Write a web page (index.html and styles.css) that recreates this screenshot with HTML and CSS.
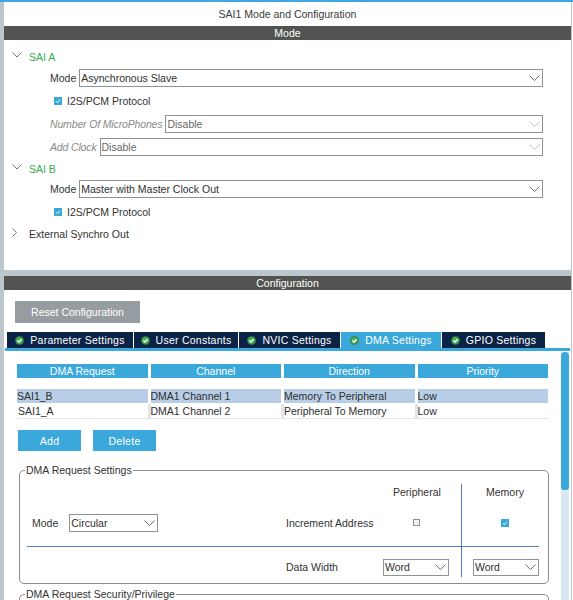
FILE: index.html
```html
<!DOCTYPE html>
<html>
<head>
<meta charset="utf-8">
<title>SAI1 Mode and Configuration</title>
<link rel="stylesheet" href="styles.css">
</head>
<body>
<div class="topline"></div>
<div class="app">
  <section class="panel mode-panel">
    <div class="title">SAI1 Mode and Configuration</div>
    <div class="bar">Mode</div>

    <div class="head head-a">
      <svg class="chev-down" width="10" height="6" viewBox="0 0 10 6"><polyline points="0.5,0.5 5,5 9.5,0.5" fill="none" stroke="#7a7a7a" stroke-width="1"/></svg>
      <span class="green">SAI A</span>
    </div>
    <div class="field f-mode-a">
      <span class="lbl">Mode</span>
      <div class="select"><span>Asynchronous Slave</span><svg width="11" height="6" viewBox="0 0 11 6"><polyline points="0.5,0.5 5.5,5.5 10.5,0.5" fill="none" stroke="#6e6e6e" stroke-width="1"/></svg></div>
    </div>
    <div class="check-row c-a">
      <svg class="cb" width="8" height="8" viewBox="0 0 8 8"><rect width="8" height="8" fill="#3aa8db"/><polyline points="2,4.2 3.4,5.6 6,2.6" fill="none" stroke="#fff" stroke-width="1"/></svg>
      <span>I2S/PCM Protocol</span>
    </div>
    <div class="field dis f-mics">
      <span class="lbl">Number Of MicroPhones</span>
      <div class="select"><span>Disable</span><svg width="11" height="6" viewBox="0 0 11 6"><polyline points="0.5,0.5 5.5,5.5 10.5,0.5" fill="none" stroke="#c4c4c4" stroke-width="1"/></svg></div>
    </div>
    <div class="field dis f-clock">
      <span class="lbl">Add Clock</span>
      <div class="select"><span>Disable</span><svg width="11" height="6" viewBox="0 0 11 6"><polyline points="0.5,0.5 5.5,5.5 10.5,0.5" fill="none" stroke="#c4c4c4" stroke-width="1"/></svg></div>
    </div>

    <div class="head head-b">
      <svg class="chev-down" width="10" height="6" viewBox="0 0 10 6"><polyline points="0.5,0.5 5,5 9.5,0.5" fill="none" stroke="#7a7a7a" stroke-width="1"/></svg>
      <span class="green">SAI B</span>
    </div>
    <div class="field f-mode-b">
      <span class="lbl">Mode</span>
      <div class="select"><span>Master with Master Clock Out</span><svg width="11" height="6" viewBox="0 0 11 6"><polyline points="0.5,0.5 5.5,5.5 10.5,0.5" fill="none" stroke="#6e6e6e" stroke-width="1"/></svg></div>
    </div>
    <div class="check-row c-b">
      <svg class="cb" width="8" height="8" viewBox="0 0 8 8"><rect width="8" height="8" fill="#3aa8db"/><polyline points="2,4.2 3.4,5.6 6,2.6" fill="none" stroke="#fff" stroke-width="1"/></svg>
      <span>I2S/PCM Protocol</span>
    </div>

    <div class="head head-ext">
      <svg class="chev-right" width="6" height="10" viewBox="0 0 6 10"><polyline points="0.5,0.5 4.5,4.5 0.5,8.5" fill="none" stroke="#7a7a7a" stroke-width="1"/></svg>
      <span>External Synchro Out</span>
    </div>
  </section>

  <section class="panel config-panel">
    <div class="bar">Configuration</div>
    <div class="reset">Reset Configuration</div>
    <div class="tabs">
      <div class="tab t1"><svg width="9" height="9" viewBox="0 0 9 9"><circle cx="4.5" cy="4.5" r="4" fill="#44ad55" stroke="#2a7a36" stroke-width="0.8"/><polyline points="2.4,4.6 3.9,6 6.6,3.2" fill="none" stroke="#fff" stroke-width="1.3"/></svg><span>Parameter Settings</span></div>
      <div class="tab t2"><svg width="9" height="9" viewBox="0 0 9 9"><circle cx="4.5" cy="4.5" r="4" fill="#44ad55" stroke="#2a7a36" stroke-width="0.8"/><polyline points="2.4,4.6 3.9,6 6.6,3.2" fill="none" stroke="#fff" stroke-width="1.3"/></svg><span>User Constants</span></div>
      <div class="tab t3"><svg width="9" height="9" viewBox="0 0 9 9"><circle cx="4.5" cy="4.5" r="4" fill="#44ad55" stroke="#2a7a36" stroke-width="0.8"/><polyline points="2.4,4.6 3.9,6 6.6,3.2" fill="none" stroke="#fff" stroke-width="1.3"/></svg><span>NVIC Settings</span></div>
      <div class="tab t4 active"><svg width="9" height="9" viewBox="0 0 9 9"><circle cx="4.5" cy="4.5" r="4" fill="#44ad55" stroke="#2a7a36" stroke-width="0.8"/><polyline points="2.4,4.6 3.9,6 6.6,3.2" fill="none" stroke="#fff" stroke-width="1.3"/></svg><span>DMA Settings</span></div>
      <div class="tab t5"><svg width="9" height="9" viewBox="0 0 9 9"><circle cx="4.5" cy="4.5" r="4" fill="#44ad55" stroke="#2a7a36" stroke-width="0.8"/><polyline points="2.4,4.6 3.9,6 6.6,3.2" fill="none" stroke="#fff" stroke-width="1.3"/></svg><span>GPIO Settings</span></div>
    </div>
    <div class="tabline"></div>
    <div class="content">
      <div class="main">
        <div class="thead">
          <div class="th">DMA Request</div>
          <div class="th">Channel</div>
          <div class="th">Direction</div>
          <div class="th">Priority</div>
        </div>
        <div class="rows">
          <div class="row sel">
            <div class="td">SAI1_B</div>
            <div class="td">DMA1 Channel 1</div>
            <div class="td">Memory To Peripheral</div>
            <div class="td">Low</div>
          </div>
          <div class="row plain">
            <div class="td first">SAI1_A</div>
            <div class="td">DMA1 Channel 2</div>
            <div class="td">Peripheral To Memory</div>
            <div class="td">Low</div>
          </div>
        </div>
        <div class="btns">
          <div class="btn">Add</div>
          <div class="btn">Delete</div>
        </div>

        <fieldset class="fs fs-req">
          <legend>DMA Request Settings</legend>
          <div class="grid">
            <div class="g-per">Peripheral</div>
            <div class="g-mem">Memory</div>
            <div class="g-vline"></div>
            <div class="g-mode"><span>Mode</span>
              <div class="select small"><span>Circular</span><svg width="11" height="6" viewBox="0 0 11 6"><polyline points="0.5,0.5 5.5,5.5 10.5,0.5" fill="none" stroke="#6e6e6e" stroke-width="1"/></svg></div>
            </div>
            <div class="g-inc">Increment Address</div>
            <div class="g-cb1"><span class="cb-off"></span></div>
            <div class="g-cb2"><svg width="8" height="8" viewBox="0 0 8 8"><rect width="8" height="8" fill="#3aa8db"/><polyline points="2,4.2 3.4,5.6 6,2.6" fill="none" stroke="#fff" stroke-width="1"/></svg></div>
            <div class="g-hline"></div>
            <div class="g-dw">Data Width</div>
            <div class="g-s1"><div class="select word"><span>Word</span><svg width="11" height="6" viewBox="0 0 11 6"><polyline points="0.5,0.5 5.5,5.5 10.5,0.5" fill="none" stroke="#6e6e6e" stroke-width="1"/></svg></div></div>
            <div class="g-s2"><div class="select word"><span>Word</span><svg width="11" height="6" viewBox="0 0 11 6"><polyline points="0.5,0.5 5.5,5.5 10.5,0.5" fill="none" stroke="#6e6e6e" stroke-width="1"/></svg></div></div>
          </div>
        </fieldset>

        <fieldset class="fs fs-sec">
          <legend>DMA Request Security/Privilege</legend>
          <div class="sec-body"></div>
        </fieldset>
      </div>
      <div class="scroll"><div class="thumb"></div></div>
    </div>
  </section>
</div>
</body>
</html>
```

FILE: styles.css
```css
* { box-sizing: border-box; }
html, body { margin: 0; padding: 0; }
body {
  width: 573px;
  height: 600px;
  overflow: hidden;
  background: #fff;
  font-family: "Liberation Sans", Arial, sans-serif;
  font-size: 10.5px;
  color: #333;
}
.topline { height: 2px; background: #3aa8db; }
.app {
  width: 572px;
  height: 598px;
  background: #bcc6cc;
  padding-left: 4px;
  display: flex;
  flex-direction: column;
  gap: 6px;
}
.panel { background: #fff; width: 567px; }
.mode-panel { height: 268px; }
.config-panel { flex: 1; overflow: hidden; }

.title {
  height: 24px;
  display: flex;
  align-items: center;
  justify-content: center;
  color: #3a3a3a;
}
.bar {
  height: 14px;
  line-height: 14px;
  background: #525452;
  color: #fff;
  text-align: center;
}

/* mode rows */
.head {
  height: 16px;
  display: flex;
  align-items: center;
  padding-left: 8px;
}
.head .chev-down { margin-right: 7px; margin-top: -5px; margin-left: 0; }
.head .chev-right { margin-right: 11px; margin-left: 0; margin-top: -2px; }
.green { color: #34ac52; }
.head-a { margin-top: 9px; }
.head-b { margin-top: 5px; }
.head-ext { margin-top: 6px; }

.field {
  height: 18px;
  display: flex;
  align-items: center;
  padding-left: 45px;
  padding-right: 28px;
  gap: 3px;
}
.field .lbl { padding-left: 1px; }
.f-mode-a { margin-top: 4px; }
.f-mics { margin-top: 6px; }
.f-clock { margin-top: 5px; }
.f-mode-b { margin-top: 3px; }

.select {
  flex: 1;
  height: 18px;
  border: 1px solid #8e9398;
  display: flex;
  align-items: center;
  justify-content: space-between;
  padding: 0 2px 0 1px;
  background: #fff;
  color: #303030;
}
.field.dis .lbl { font-style: italic; color: #8a8a8a; letter-spacing: -0.15px; }
.field.dis .select { color: #6a6a6a; }

.check-row {
  height: 16px;
  display: flex;
  align-items: center;
  padding-left: 50px;
  gap: 5px;
}
.c-a { margin-top: 6px; }
.c-b { margin-top: 6px; }

/* configuration */
.reset {
  margin: 11px 0 0 11px;
  width: 125px;
  height: 22px;
  background: #979ca1;
  color: #fff;
  display: flex;
  align-items: center;
  justify-content: center;
}
.tabs {
  display: flex;
  gap: 1px;
  margin: 9px 0 0 3px;
  height: 16px;
}
.tab {
  background: #0b2346;
  color: #fff;
  display: flex;
  align-items: center;
  justify-content: center;
  gap: 6px;
  letter-spacing: 0.25px;
}
.tab.active { background: #3aa8db; }
.t1 { width: 126px; }
.t2 { width: 104px; }
.t3 { width: 101px; }
.t4 { width: 100px; }
.t5 { width: 103px; }
.tabline { height: 3px; background: #3aa8db; margin: 0 1px; }

.content {
  display: flex;
  margin: 0 1px;
  height: 249px;
}
.main {
  flex: 1;
  padding: 13px 0 0 12px;
  overflow: hidden;
}
.scroll {
  width: 8px;
  margin: 1px 1px 0 0;
  background: #d8e7f4;
}
.thumb {
  height: 138px;
  background: #3aa8db;
  border-radius: 4px 4px 3px 3px;
}

.thead, .row {
  display: grid;
  grid-template-columns: repeat(4, 1fr);
  column-gap: 3px;
  width: 531px;
}
.th {
  background: #3aa8db;
  color: #fff;
  text-align: center;
  height: 14px;
  line-height: 14px;
}
.rows { margin-top: 11px; width: 531px; }
.row { height: 15px; }
.td { height: 14px; line-height: 14px; white-space: nowrap; color: #2e2e2e; }
.row.sel { background: #fff; }
.row.sel .td { background: #b8cee6; }
.row.plain { background: #e2e4e6; padding-bottom: 1px; }
.row.plain .td { background: #fff; }
.row.plain .first { padding-left: 1px; }

.btns {
  display: flex;
  gap: 12px;
  margin-top: 11px;
  padding-left: 1px;
}
.btn {
  width: 63px;
  height: 21px;
  background: #3aa8db;
  color: #fff;
  display: flex;
  align-items: center;
  justify-content: center;
  letter-spacing: 0.3px;
}

.fs {
  margin: 0 0 0 2px;
  padding: 0;
  width: 530px;
  border: 1px solid #8c8c8c;
  border-radius: 5px;
  min-inline-size: 0;
}
.fs legend {
  padding: 0 1px;
  margin-left: 5px;
  line-height: 13px;
  color: #333;
}
.fs-req { margin-top: 13px; }
.fs-sec { margin-top: 4px; }
.sec-body { height: 60px; }

.grid {
  display: grid;
  grid-template-columns: 266px 97px 78px 1px 86px;
  grid-template-rows: 16px 46px 1px 30px;
  margin-top: 7px;
  margin-bottom: 6px;
}
.g-per { grid-column: 3; grid-row: 1; align-self: center; margin-left: 10px; }
.g-mem { grid-column: 5; grid-row: 1; align-self: center; justify-self: center; }
.g-vline { grid-column: 4; grid-row: 1 / 5; background: #5679c0; }
.g-mode {
  grid-column: 1; grid-row: 2;
  display: flex; align-items: center;
  padding-left: 12px; gap: 11px;
}
.select.small { flex: none; width: 89px; }
.g-inc { grid-column: 2; grid-row: 2; align-self: center; }
.g-cb1 { grid-column: 3; grid-row: 2; align-self: center; margin-left: 30px; display: flex; margin-top: -1px; }
.cb-off { width: 7px; height: 7px; border: 1px solid #8f8f8f; background: #f3f3f3; }
.g-cb2 { grid-column: 5; grid-row: 2; align-self: center; justify-self: center; display: flex; margin-top: -1px; }
.g-hline { grid-column: 1 / 6; grid-row: 3; background: #5679c0; margin: 0 9px 0 7px; }
.g-dw { grid-column: 2; grid-row: 4; align-self: center; margin-top: 10px; }
.g-s1 { grid-column: 3; grid-row: 4; align-self: center; display: flex; margin-top: 10px; }
.g-s2 { grid-column: 5; grid-row: 4; align-self: center; display: flex; margin-top: 10px; padding-left: 11px; }
.select.word { flex: none; width: 66px; height: 17px; }
```
